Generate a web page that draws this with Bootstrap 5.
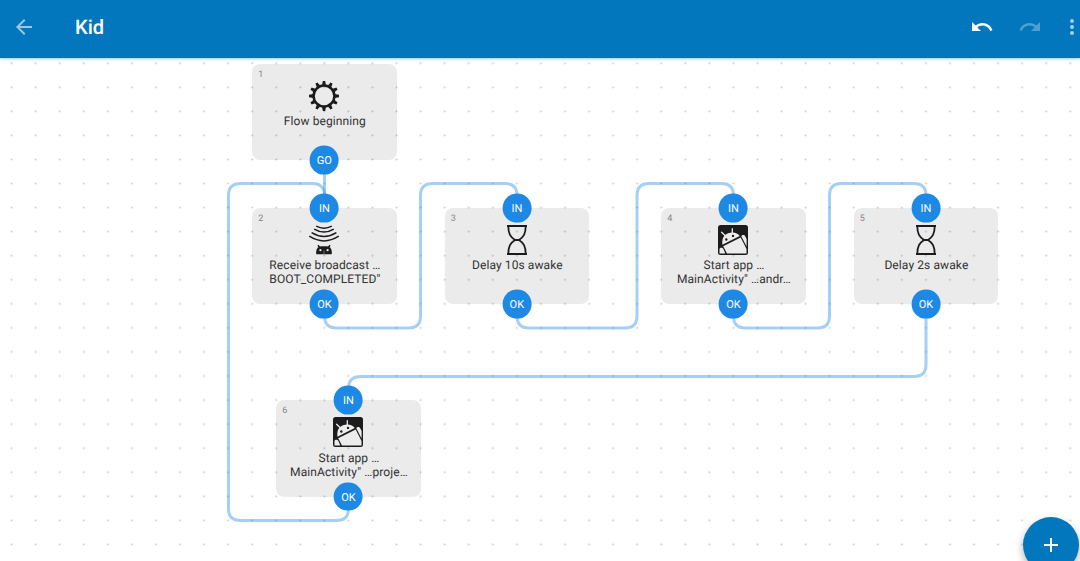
<!DOCTYPE html>
<html lang="en">
<head>
<meta charset="utf-8">
<meta name="viewport" content="width=device-width, initial-scale=1">
<title>Kid</title>
<link href="https://cdn.jsdelivr.net/npm/bootstrap@5.3.0/dist/css/bootstrap.min.css" rel="stylesheet">
<style>
  body { font-family: Roboto, "Liberation Sans", sans-serif; color: #333; text-rendering: geometricPrecision; }
  .app-bar { height: 58px; background: #0277bd; padding: 0 2px 5px 11.5px; box-shadow: 0 1px 2px rgba(2,119,189,.4); z-index: 2; }
  .app-title { font-size: 20px; font-weight: 500; line-height: 24px; margin-left: 39.5px; }
  .tool { width: 24px; height: 24px; }
  .flow { --u: 24.06px; --ox: 11.6px; --oy: 5.5px; }
  .flow > svg { left: 0; top: 0; }
  .block { left: calc(var(--ox) + var(--c) * var(--u)); top: calc(var(--oy) + var(--r) * var(--u)); width: 144.4px; height: 96.3px; background: rgba(0,0,0,.08); border-radius: 8px; padding-top: 16px; }
  .block svg { width: 32px; height: 32px; }
  .block-label { font-size: 12px; line-height: 14px; letter-spacing: .1px; margin-top: 2.3px; padding-left: 1px; white-space: nowrap; }
  .block-no { left: 6px; top: 5px; font-size: 9px; line-height: 12px; color: #858585; }
  .port { left: 50%; width: 28.8px; height: 28.8px; background: #1e88e5; font-size: 11px; line-height: 1; }
  .fab { width: 56px; height: 56px; left: 1022.5px; top: 458.5px; background: #0277bd; box-shadow: 0 4px 9px rgba(0,0,0,.3); }
</style>
</head>
<body class="vh-100 d-flex flex-column overflow-hidden bg-white">
<svg class="d-none" xmlns="http://www.w3.org/2000/svg">
  <symbol id="gear" viewBox="0 0 32 32">
    <circle cx="16" cy="16" r="10.4" fill="none" stroke="#1c1c1c" stroke-width="2.5"/>
    <g fill="#1c1c1c">
      <path id="teeth" d="M14 5.5 14.8 1H17.2L18 5.5ZM14 26.5 14.8 31H17.2L18 26.5ZM5.5 14 1 14.8V17.2L5.5 18ZM26.5 14 31 14.8V17.2L26.5 18Z"/>
      <use href="#teeth" transform="rotate(30 16 16)"/>
      <use href="#teeth" transform="rotate(60 16 16)"/>
    </g>
  </symbol>
  <symbol id="broadcast" viewBox="0 0 32 32">
    <g fill="none" stroke="#1c1c1c" stroke-width="1.5">
      <path d="M1.3 12.2Q16 21.6 30.7 12.2M3.6 8.6Q16 16.2 28.4 8.6M6.2 5.2Q16 11 25.8 5.2M8.2 2.2Q16 6.3 23.8 2.2"/>
      <path d="M10 21.2 12 24M22 21.2 20 24"/>
    </g>
    <path fill="#1c1c1c" d="M8.2 30.3V27.5Q8.6 22.6 13 22.2H19Q23.4 22.6 23.8 27.5V30.3Z"/>
    <circle cx="12.4" cy="26.2" r="1.1" fill="#ebebeb"/><circle cx="19.6" cy="26.2" r="1.1" fill="#ebebeb"/>
    <path d="M16 26.5V30.3" stroke="#999" stroke-width=".7"/>
  </symbol>
  <symbol id="hourglass" viewBox="0 0 32 32">
    <path fill="none" stroke="#1c1c1c" stroke-width="1.8" d="M6 2H26M6 30H26M7.3 2C7.3 10 9.5 13 14 16 9.500 19 7.300 22 7.300 30M24.700 2C24.700 10 22.500 13 18 16 22.500 19 24.700 22 24.700 30M13.500 16H18.500"/>
  </symbol>
  <symbol id="robot" viewBox="0 0 32 32">
    <rect x="1" y="1" width="30" height="30" rx="2.500" fill="#1c1c1c"/>
    <g fill="#ececec">
      <path d="M5.400 20.700C4.400 12.500 8.500 9.300 13.500 8.700 18 8.200 21 9.500 22.700 12.100Z"/>
      <path d="M6.200 22.200 23.700 13.400 29.500 25V29.500H10Z"/>
      <path d="M24.300 12.200C25 10.500 27.500 10.500 28.200 12.200L29.600 15V22.500Z"/>
      <path d="M2.500 25C3 23.300 5.500 23.300 6.400 25L8.300 29.500H2.500Z"/>
    </g>
    <path d="M4.600 8.200 8 11.500M15.300 4.700V9.500" stroke="#ececec" stroke-width="1.300" stroke-linecap="round"/>
    <circle cx="9.300" cy="15.500" r="1.200" fill="#1c1c1c"/><circle cx="16" cy="11.900" r="1.200" fill="#1c1c1c"/>
  </symbol>
</svg>

<header class="app-bar navbar-dark d-flex align-items-center flex-shrink-0 text-white position-relative">
  <svg class="tool" viewBox="0 0 24 24" fill="#fff" fill-opacity=".6"><path d="M20 11H7.830l5.590-5.590L12 4l-8 8 8 8 1.410-1.410L7.830 13H20z"/></svg>
  <h1 class="app-title mb-0">Kid</h1>
  <div class="ms-auto d-flex align-items-center">
    <svg class="tool" viewBox="0 0 24 24" fill="#fff"><path d="M12.500 8c-2.650 0-5.050.99-6.900 2.600L2 7v9h9l-3.620-3.620c1.390-1.160 3.160-1.880 5.120-1.880 3.540 0 6.550 2.310 7.600 5.500l2.370-.78C21.080 11.030 17.150 8 12.500 8z"/></svg>
    <svg class="tool" style="margin-left:24px" viewBox="0 0 24 24" fill="#fff" fill-opacity=".3"><path d="M18.400 10.600C16.550 8.990 14.150 8 11.500 8c-4.650 0-8.580 3.030-9.960 7.220L3.900 16c1.050-3.190 4.050-5.500 7.600-5.500 1.950 0 3.730.72 5.120 1.880L13 16h9V7l-3.600 3.600z"/></svg>
    <svg style="margin-left:24px" width="12" height="24" viewBox="6 0 12 24" fill="#fff" fill-opacity=".65"><circle cx="12" cy="6" r="2"/><circle cx="12" cy="12" r="2"/><circle cx="12" cy="18" r="2"/></svg>
  </div>
</header>

<main class="flow position-relative flex-grow-1">
  <svg class="position-absolute" width="1080" height="503" viewBox="0 58 1080 503">
    <defs>
      <pattern id="dots" x="-.4" y="51.200" width="24.060" height="24.060" patternUnits="userSpaceOnUse"><circle cx="12" cy="12" r="1" fill="#c9c9c9"/></pattern>
    </defs>
    <rect y="58" width="1080" height="503" fill="url(#dots)"/>
    <g fill="none" stroke="#1e88e5" stroke-opacity=".4" stroke-width="3">
      <path d="M324.500 159V207"/>
      <path d="M324.500 304V316Q324.500 328 336.500 328H408.500Q420.500 328 420.500 316V195.500Q420.500 183.500 432.500 183.500H505Q517 183.500 517 195.500V207"/>
      <path d="M517 304V316Q517 328 529 328H625Q637 328 637 316V195.500Q637 183.500 649 183.500H721.500Q733.500 183.500 733.500 195.500V207"/>
      <path d="M733.500 304V316Q733.500 328 745.500 328H817.500Q829.500 328 829.500 316V195.500Q829.500 183.500 841.500 183.500H914Q926 183.500 926 195.500V207"/>
      <path d="M926 304V364.500Q926 376.500 914 376.500H360.500Q348.500 376.500 348.500 388.500V400"/>
      <path d="M348.500 496V508.500Q348.500 520.500 336.500 520.500H240.500Q228.500 520.500 228.500 508.500V195.500Q228.500 183.500 240.500 183.500H312.500Q324.500 183.500 324.500 195.500V207"/>
    </g>
  </svg>

  <section class="block position-absolute d-flex flex-column align-items-center" style="--c:10;--r:0">
    <span class="block-no position-absolute">1</span>
    <svg><use href="#gear"/></svg>
    <div class="block-label text-center">Flow beginning</div>
    <span class="port position-absolute top-100 translate-middle rounded-circle text-white d-flex align-items-center justify-content-center">GO</span>
  </section>
  <section class="block position-absolute d-flex flex-column align-items-center" style="--c:10;--r:6">
    <span class="block-no position-absolute">2</span>
    <span class="port position-absolute top-0 translate-middle rounded-circle text-white d-flex align-items-center justify-content-center">IN</span>
    <svg><use href="#broadcast"/></svg>
    <div class="block-label text-center">Receive broadcast …<br>BOOT_COMPLETED"</div>
    <span class="port position-absolute top-100 translate-middle rounded-circle text-white d-flex align-items-center justify-content-center">OK</span>
  </section>
  <section class="block position-absolute d-flex flex-column align-items-center" style="--c:18;--r:6">
    <span class="block-no position-absolute">3</span>
    <span class="port position-absolute top-0 translate-middle rounded-circle text-white d-flex align-items-center justify-content-center">IN</span>
    <svg><use href="#hourglass"/></svg>
    <div class="block-label text-center">Delay 10s awake</div>
    <span class="port position-absolute top-100 translate-middle rounded-circle text-white d-flex align-items-center justify-content-center">OK</span>
  </section>
  <section class="block position-absolute d-flex flex-column align-items-center" style="--c:27;--r:6">
    <span class="block-no position-absolute">4</span>
    <span class="port position-absolute top-0 translate-middle rounded-circle text-white d-flex align-items-center justify-content-center">IN</span>
    <svg><use href="#robot"/></svg>
    <div class="block-label text-center">Start app …<br>MainActivity" …andr…</div>
    <span class="port position-absolute top-100 translate-middle rounded-circle text-white d-flex align-items-center justify-content-center">OK</span>
  </section>
  <section class="block position-absolute d-flex flex-column align-items-center" style="--c:35;--r:6">
    <span class="block-no position-absolute">5</span>
    <span class="port position-absolute top-0 translate-middle rounded-circle text-white d-flex align-items-center justify-content-center">IN</span>
    <svg><use href="#hourglass"/></svg>
    <div class="block-label text-center">Delay 2s awake</div>
    <span class="port position-absolute top-100 translate-middle rounded-circle text-white d-flex align-items-center justify-content-center">OK</span>
  </section>
  <section class="block position-absolute d-flex flex-column align-items-center" style="--c:11;--r:14">
    <span class="block-no position-absolute">6</span>
    <span class="port position-absolute top-0 translate-middle rounded-circle text-white d-flex align-items-center justify-content-center">IN</span>
    <svg><use href="#robot"/></svg>
    <div class="block-label text-center">Start app …<br>MainActivity" …proje…</div>
    <span class="port position-absolute top-100 translate-middle rounded-circle text-white d-flex align-items-center justify-content-center">OK</span>
  </section>

  <button class="fab position-absolute border-0 rounded-circle p-0 d-flex align-items-center justify-content-center" type="button" aria-label="Add">
    <svg width="24" height="24" viewBox="0 0 24 24" fill="#fff"><path d="M19 13h-6v6h-2v-6H5v-2h6V5h2v6h6v2z"/></svg>
  </button>
</main>
<script src="https://cdn.jsdelivr.net/npm/bootstrap@5.3.0/dist/js/bootstrap.bundle.min.js"></script>
</body>
</html>
